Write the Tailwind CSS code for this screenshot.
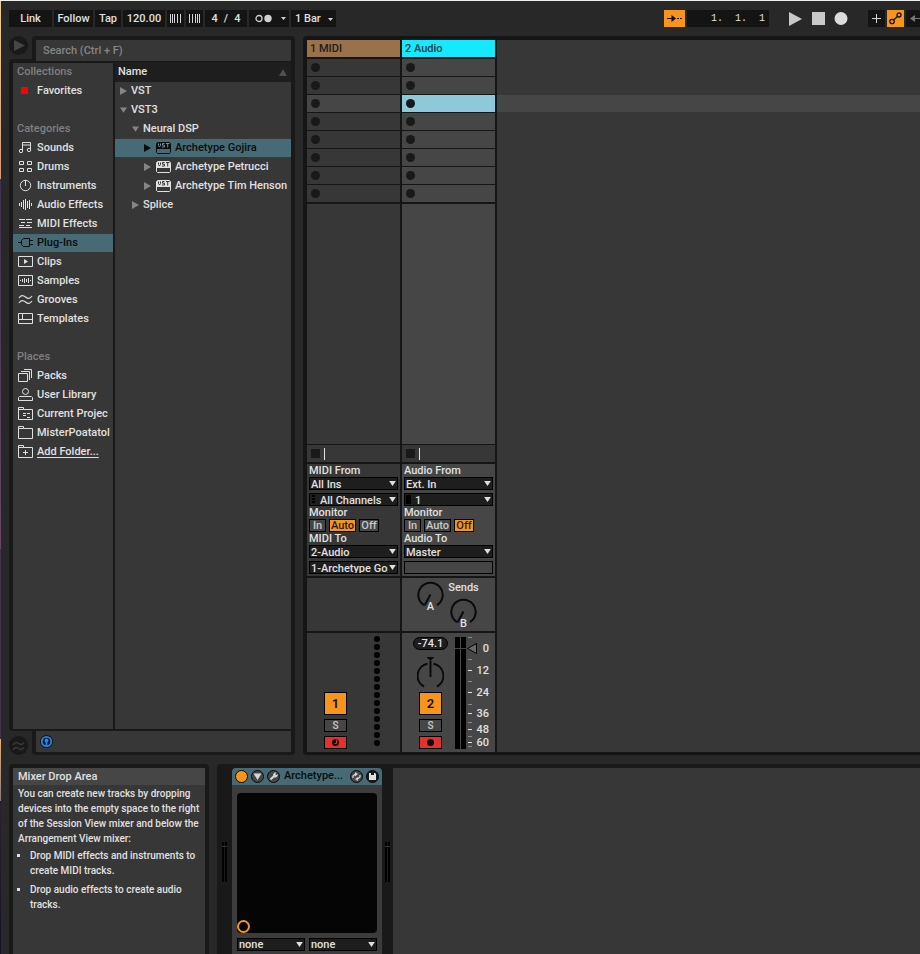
<!DOCTYPE html>
<html lang="en">
<head>
  <meta charset="UTF-8" />
  <meta name="viewport" content="width=device-width, initial-scale=1.0"/>
  <title>Session View</title>
  <script src="https://cdn.jsdelivr.net/npm/@tailwindcss/browser@4"></script>
</head>
<body class="bg-[#282828] text-[#e0e0e0] font-['Roboto',sans-serif] text-[11px] font-medium">
  <!-- shared symbols -->
  <svg class="hidden">
    <symbol id="down" viewBox="0 0 8 6"><path d="M0 0h8L4 6z" fill="currentColor"/></symbol>
    <symbol id="right" viewBox="0 0 7 8"><path d="M0 0l7 4-7 4z" fill="currentColor"/></symbol>
    <symbol id="vst" viewBox="0 0 15 12">
      <path d="M1.500 .5h12l1 1v9l-1 1h-12l-1-1v-9z" fill="none" stroke="currentColor"/>
      <path d="M1 1h13v6H1z" fill="currentColor"/>
      <path d="M2.500 1.500v2l1 1.500 1-1.500v-2M8.500 1.500h-2v1.700h2v1.800h-2.500M10 1.500h3.500M11.700 1.500v4" fill="none" stroke="var(--cut,#373737)"/>
    </symbol>
    <symbol id="knob" viewBox="0 0 27 32">
      <path d="M7 24.200a12.200 12.200 0 1 1 13 0M13.500 13.500l-6 11" fill="none" stroke="#0a0a0a" stroke-width="2"/>
    </symbol>
  </svg>

  <div class="h-screen min-h-[760px] flex flex-col overflow-hidden border-t border-t-[#eceeec] relative">
    <div class="absolute left-0 top-0 bottom-0 w-px flex flex-col">
      <div class="h-[178px] bg-linear-to-b from-[#f0cf94] to-[#d99a78]"></div>
      <div class="h-[370px] bg-linear-to-b from-[#3d3050] to-[#6b4766]"></div>
      <div class="h-[190px] bg-[#43304a]"></div>
      <div class="h-[62px] bg-linear-to-b from-[#e8b070] to-[#8a7a80]"></div>
      <div class="flex-1 bg-linear-to-b from-[#2a2030] to-[#161028]"></div>
    </div>

    <!-- control bar -->
    <header class="h-[35px] shrink-0 pt-[9px] pl-[9px] flex items-start gap-0.5 *:shrink-0">
      <button class="h-[17px] w-[43px] pt-px bg-[#141414]">Link</button>
      <button class="h-[17px] w-[39px] pt-px bg-[#141414]">Follow</button>
      <button class="h-[17px] w-[26px] pt-px bg-[#141414]">Tap</button>
      <input aria-label="Tempo" value="120.00" class="h-[17px] w-[42px] bg-[#141414] text-center"/>
      <button aria-label="Nudge down" class="h-[17px] w-[17px] bg-[#141414]">
        <svg class="mx-auto" width="11" height="9" fill="none" stroke="#d5d5d5"><path d="M.5 0v9M2.500 0v9M4.500 0v9M7.500 0v9M10.500 0v9"/></svg>
      </button>
      <button aria-label="Nudge up" class="h-[17px] w-[17px] bg-[#141414]">
        <svg class="mx-auto" width="11" height="9" fill="none" stroke="#d5d5d5"><path d="M.5 0v9M3.500 0v9M6.500 0v9M8.500 0v9M10.500 0v9"/></svg>
      </button>
      <button class="h-[17px] w-[42px] pt-px bg-[#141414] flex items-center justify-center gap-1.5"><span>4</span><span>/</span><span>4</span></button>
      <button aria-label="Metronome" class="h-[17px] w-[40px] bg-[#141414] flex items-center justify-between pl-1.5 pr-[3px]">
        <svg width="17" height="9"><circle cx="4" cy="4.500" r="3" fill="none" stroke="#d0d0d0" stroke-width="1.300"/><circle cx="13" cy="4.500" r="3.700" fill="#d0d0d0"/></svg>
        <svg width="5" height="3" class="text-[#d0d0d0]"><path d="M0 0h5L2.500 3z" fill="currentColor"/></svg>
      </button>
      <button class="h-[17px] w-[45px] pt-px bg-[#141414] flex items-center justify-between pl-1 pr-[3px]">1 Bar
        <svg width="5" height="3" class="text-[#d0d0d0]"><path d="M0 0h5L2.500 3z" fill="currentColor"/></svg>
      </button>

      <div class="ml-auto flex gap-0.5">
        <button aria-label="Follow playback" class="h-[17px] w-[21px] bg-[#f7941d]">
          <svg class="mx-auto" width="15" height="9"><path d="M0 4.500h6M10 4.500h2M13 4.500h2" stroke="#111"/><path d="M4.500 1v7L9 4.500z" fill="#111"/></svg>
        </button>
        <input aria-label="Arrangement position" value="1.  1.  1" class="h-[17px] w-[82px] bg-[#141414] text-right pr-1 text-[10px] font-['Liberation_Mono',monospace]"/>
        <div class="flex items-center gap-[9px] px-[18px] h-[17px]">
          <button aria-label="Play"><svg width="14" height="14"><path d="M0 0l13 7L0 14z" fill="#c9c9c9"/></svg></button>
          <button aria-label="Stop"><svg width="13" height="13"><path d="M0 0h13v13H0z" fill="#c9c9c9"/></svg></button>
          <button aria-label="Record"><svg width="14" height="13"><circle cx="7" cy="6.500" r="6.500" fill="#dcdcdc"/></svg></button>
        </div>
        <button aria-label="Overdub" class="h-[17px] w-[17px] bg-[#141414]">
          <svg class="mx-auto" width="9" height="9"><path d="M4.500 0v9M0 4.500h9" stroke="#d5d5d5"/></svg>
        </button>
        <button aria-label="Automation arm" class="h-[17px] w-[17px] bg-[#f7941d]">
          <svg class="mx-auto" width="13" height="13" fill="none" stroke="#111" stroke-width="1.300"><circle cx="3" cy="9.500" r="2.200"/><circle cx="10" cy="3" r="2"/><path d="M4.500 8l4-3.500"/></svg>
        </button>
        <button aria-label="Re-enable automation" class="h-[17px] w-[14px] bg-[#141414] pl-1">
          <svg width="10" height="9"><path d="M4 4.500h6" stroke="#777"/><path d="M5 1v7L0 4.500z" fill="#777"/></svg>
        </button>
      </div>
    </header>

    <main class="flex-1 min-h-0 flex gap-2 pl-[9px]">
      <!-- browser -->
      <section class="w-[286px] shrink-0 flex flex-col">
        <div class="flex h-[23px] shrink-0">
          <button aria-label="Preview" class="w-[19px] h-[19px] mr-1 rounded-full bg-[#191919] flex items-center justify-center text-[#464646]">
            <svg width="12" height="11" class="ml-0.5"><path d="M0 0l11 5.500L0 11z" fill="currentColor"/></svg>
          </button>
          <div class="flex-1 bg-[#191919] rounded-t pt-1 px-1 flex">
            <input aria-label="Search" placeholder="Search (Ctrl + F)" class="w-full h-[21px] bg-[#373737] px-[7px] placeholder:text-[#858585] relative"/>
          </div>
        </div>
        <div class="flex-1 min-h-0 flex gap-0.5 bg-[#191919] rounded-l p-1 pb-0.5">
          <nav class="w-[100px] shrink-0 bg-[#373737] overflow-hidden leading-[18px] whitespace-nowrap">
            <h2 class="h-[19px] pl-1 text-[#808080]">Collections</h2>
            <a href="#" class="flex items-center h-[18px] pl-2 gap-[9px]"><span class="w-[7px] h-2 border-b border-[#373737] bg-[#f00]"></span>Favorites</a>
            <h2 class="h-[19px] pl-1 mt-5 text-[#808080]">Categories</h2>
            <div class="flex flex-col gap-px">
              <a href="#" class="flex items-center h-[18px] pl-[5px] gap-1">
                <svg width="15" height="14" fill="none" stroke="currentColor"><path d="M4.500 10V1.500h8V9M4.500 4h8"/><circle cx="3" cy="10" r="1.700"/><circle cx="11" cy="9" r="1.700"/></svg>Sounds</a>
              <a href="#" class="flex items-center h-[18px] pl-[5px] gap-1">
                <svg width="15" height="14" fill="none" stroke="currentColor"><path d="M1.500 1.500h4v3h-4zM9.500 1.500h4v3h-4zM1.500 8.500h4v3h-4zM9.500 8.500h4v3h-4z"/></svg>Drums</a>
              <a href="#" class="flex items-center h-[18px] pl-[5px] gap-1">
                <svg width="15" height="14" fill="none" stroke="currentColor"><circle cx="7.500" cy="6.500" r="5.200"/><path d="M7.500 1v6"/></svg>Instruments</a>
              <a href="#" class="flex items-center h-[18px] pl-[5px] gap-1">
                <svg width="15" height="14" fill="none" stroke="currentColor"><path d="M1.500 5v3M3.500 4v5M5.500 2v9M7.500 1v11M9.500 3v7M11.500 2v9M13.500 5v3"/></svg>Audio Effects</a>
              <a href="#" class="flex items-center h-[18px] pl-[5px] gap-1">
                <svg width="15" height="14" fill="none" stroke="currentColor"><path d="M1 2.500h6M8 2.500h6M3 5.500h4M9 5.500h5M1 8.500h5M8 8.500h4M1 10.500h13"/></svg>MIDI Effects</a>
              <a href="#" class="flex items-center h-[18px] pl-[5px] gap-1 bg-[#466a76] text-[#0c0c0c]">
                <svg width="15" height="14" fill="none" stroke="currentColor"><path d="M0 6.500h3M11.500 2.500h-6l-2 2v4l2 2h6zM12 4.500h3M12 8.500h3"/></svg>Plug-Ins</a>
              <a href="#" class="flex items-center h-[18px] pl-[5px] gap-1">
                <svg width="15" height="14" fill="none" stroke="currentColor"><path d="M.5 1.500h14v10H.5z"/><path d="M6 4l4 2.500L6 9z" fill="currentColor" stroke="none"/></svg>Clips</a>
              <a href="#" class="flex items-center h-[18px] pl-[5px] gap-1">
                <svg width="15" height="14" fill="none" stroke="currentColor"><path d="M.5 1.500h14v10H.5zM2.500 6v1M4.500 5v3M6.500 4v5M8.500 5v3M10.500 4v5M12.500 6v1"/></svg>Samples</a>
              <a href="#" class="flex items-center h-[18px] pl-[5px] gap-1">
                <svg width="15" height="14" fill="none" stroke="currentColor" stroke-width="1.200"><path d="M1 5c2-3 4-3 6.500-1S12 6 14 3M1 10c2-3 4-3 6.500-1S12 11 14 8"/></svg>Grooves</a>
              <a href="#" class="flex items-center h-[18px] pl-[5px] gap-1">
                <svg width="15" height="14" fill="none" stroke="currentColor"><path d="M.5 1.500h14v10H.5zM.5 7.500h14M4.500 1.500v6"/></svg>Templates</a>
            </div>
            <h2 class="h-[19px] pl-1 mt-5 text-[#808080]">Places</h2>
            <div class="flex flex-col gap-px">
              <a href="#" class="flex items-center h-[18px] pl-[5px] gap-1">
                <svg width="15" height="14" fill="none" stroke="currentColor"><path d="M.5 4.500h9v8h-9zM3 2.500h8.500V11M6 .5h7.500V9"/></svg>Packs</a>
              <a href="#" class="flex items-center h-[18px] pl-[5px] gap-1">
                <svg width="15" height="14" fill="none" stroke="currentColor"><circle cx="7.500" cy="3.500" r="3"/><path d="M.5 12.500v-3l1-1h12l1 1v3z"/></svg>User Library</a>
              <a href="#" class="flex items-center h-[18px] pl-[5px] gap-1">
                <svg class="shrink-0" width="15" height="14" fill="none" stroke="currentColor"><path d="M.5 12.500V.5h5v2h9v10zM.5 2.500h5M5 6.500h3M5 8.500h3M9 6.500h3M9 10.500h3"/></svg>Current Projec</a>
              <a href="#" class="flex items-center h-[18px] pl-[5px] gap-1">
                <svg class="shrink-0" width="15" height="14" fill="none" stroke="currentColor"><path d="M.5 12.500V.5h5v2h9v10zM.5 2.500h5"/></svg>MisterPoatatol</a>
              <a href="#" class="flex items-center h-[18px] pl-[5px] gap-1">
                <svg width="15" height="14" fill="none" stroke="currentColor"><path d="M.5 12.500V.5h5v2h9v10zM.5 2.500h5M7.500 5v5M5 7.500h5"/></svg><span class="underline underline-offset-2">Add Folder...</span></a>
            </div>
          </nav>
          <div class="flex-1 min-w-0 bg-[#373737] -mt-px whitespace-nowrap">
            <div class="h-5 pt-px bg-[#1e1e1e] flex items-center justify-between pl-[3px] pr-1">Name
              <svg width="8" height="7"><path d="M4 0l4 7H0z" fill="#505050"/></svg>
            </div>
            <div class="flex flex-col gap-px">
              <div class="h-[18px] flex items-center pl-[5px] gap-1"><svg class="w-[7px] h-2 text-[#858585]"><use href="#right"/></svg>VST</div>
              <div class="h-[18px] flex items-center pl-[5px] gap-1"><svg class="w-[7px] h-1.5 text-[#858585]"><use href="#down"/></svg>VST3</div>
              <div class="h-[18px] flex items-center pl-[17px] gap-1"><svg class="w-[7px] h-1.5 text-[#858585]"><use href="#down"/></svg>Neural DSP</div>
              <div class="h-[18px] flex items-center pl-[29px] gap-1 bg-[#466a76] text-[#0c0c0c]"><svg class="w-[7px] h-2"><use href="#right"/></svg><svg class="w-[15px] h-3 ml-px [--cut:#6d949f]"><use href="#vst"/></svg>Archetype Gojira</div>
              <div class="h-[18px] flex items-center pl-[29px] gap-1"><svg class="w-[7px] h-2 text-[#858585]"><use href="#right"/></svg><svg class="w-[15px] h-3 ml-px"><use href="#vst"/></svg>Archetype Petrucci</div>
              <div class="h-[18px] flex items-center pl-[29px] gap-1"><svg class="w-[7px] h-2 text-[#858585]"><use href="#right"/></svg><svg class="w-[15px] h-3 ml-px"><use href="#vst"/></svg>Archetype Tim Henson</div>
              <div class="h-[18px] flex items-center pl-[17px] gap-1"><svg class="w-[7px] h-2 text-[#858585]"><use href="#right"/></svg>Splice</div>
            </div>
          </div>
        </div>
        <div class="flex h-6 shrink-0">
          <button aria-label="Groove pool" class="w-[19px] h-[19px] mt-[5px] mr-1 rounded-full bg-[#191919] flex items-center justify-center">
            <svg width="13" height="10" fill="none" stroke="#383838" stroke-width="1.500"><path d="M1 4c2-3 3.500-3 5.500-1.500S10 4 12 1.500M1 9c2-3 3.500-3 5.500-1.500S10 9 12 6.500"/></svg>
          </button>
          <div class="flex-1 bg-[#191919] rounded-b px-1 pb-[3px]">
            <div class="h-[21px] bg-[#373737] flex items-center pl-1">
              <button aria-label="Raw preview"><svg width="13" height="13"><circle cx="6.500" cy="6.500" r="6.500" fill="#0b1420"/><circle cx="6.500" cy="6.500" r="4.700" fill="none" stroke="#2d85e0" stroke-width="1.800"/><path d="M6.500 5v6" stroke="#2d85e0" stroke-width="1.800"/><circle cx="6.500" cy="5.500" r="2" fill="#2d85e0"/></svg></button>
            </div>
          </div>
        </div>
      </section>

      <!-- session view -->
      <section class="flex-1 min-w-0 flex gap-0.5 bg-[#151515] rounded-l p-1 pb-[3px] pr-0">
        <article class="w-[93px] shrink-0 flex flex-col gap-0.5">
          <h2 class="h-[17px] bg-[#99724b] text-[#1c1c1c] leading-[17px] pl-[3px]">1 MIDI</h2>
          <div class="flex flex-col gap-px" data-slots="midi"></div>
          <div class="flex-1 flex flex-col gap-px">
            <div class="flex-1 bg-[#373737]"></div>
            <div class="h-[17px] bg-[#373737] flex items-center pl-1 gap-1">
              <button aria-label="Stop clip" class="w-[9px] h-[9px] bg-[#191919]"></button><span class="w-px h-3 bg-[#e0e0e0]"></span>
            </div>
          </div>
          <div class="bg-[#373737] px-0.5 pb-0.5 leading-[13px]">
            <label for="midi-from" class="block">MIDI From</label>
            <div class="relative mb-[3px]">
              <select id="midi-from" class="block w-full h-[13px] appearance-none bg-[#1e1e1e] border border-black pl-px pr-3"><option>All Ins</option></select>
              <svg class="absolute right-0.5 top-1 w-[7px] h-[5px] pointer-events-none"><use href="#down"/></svg>
            </div>
            <div class="relative">
              <select aria-label="MIDI channel" class="block w-full h-[13px] appearance-none bg-[#1e1e1e] border border-black pl-2.5 pr-[9px]"><option>All Channels</option></select>
              <svg class="absolute left-[3px] top-0.5 pointer-events-none" width="3" height="9"><path d="M1.500 0v9" stroke="#000" stroke-width="3" stroke-dasharray="2 1"/></svg>
              <svg class="absolute right-0.5 top-1 w-[7px] h-[5px] pointer-events-none"><use href="#down"/></svg>
            </div>
            <div>Monitor</div>
            <div class="flex gap-[3px] leading-[11px] text-[#c8c8c8]">
              <button class="w-[17px] h-[13px] border border-black bg-[#464646]">In</button>
              <button class="w-[27px] h-[13px] border border-black bg-[#f7941d] text-[#1c1c1c]">Auto</button>
              <button class="w-5 h-[13px] border border-black bg-[#464646]">Off</button>
            </div>
            <label for="midi-to" class="block">MIDI To</label>
            <div class="relative mb-[3px]">
              <select id="midi-to" class="block w-full h-[13px] appearance-none bg-[#1e1e1e] border border-black pl-px pr-3"><option>2-Audio</option></select>
              <svg class="absolute right-0.5 top-1 w-[7px] h-[5px] pointer-events-none"><use href="#down"/></svg>
            </div>
            <div class="relative">
              <select aria-label="MIDI destination" class="block w-full h-[13px] appearance-none bg-[#1e1e1e] border border-black pl-px pr-[9px]"><option>1-Archetype Gojira</option></select>
              <svg class="absolute right-0.5 top-1 w-[7px] h-[5px] pointer-events-none"><use href="#down"/></svg>
            </div>
          </div>
          <div class="h-[53px] bg-[#373737]"></div>
          <div class="h-[119px] bg-[#373737] flex items-end gap-[27px] pl-[17px] pb-[3px]">
            <div class="flex flex-col gap-1 w-[23px]">
              <button class="h-[23px] border border-black bg-[#f7941d] text-[#111] text-[13px] font-semibold">1</button>
              <button class="h-[13px] border border-black bg-[#464646] text-[#c8c8c8] text-[10px] leading-[11px]">S</button>
              <button aria-label="Arm track 1" class="h-[13px] border border-black bg-[#e4322b]">
                <svg class="mx-auto" width="7" height="7"><circle cx="3.500" cy="3.500" r="3.500" fill="#0c0c0c"/><path d="M4.500 1v3.500h-2" fill="none" stroke="#e4322b"/></svg>
              </button>
            </div>
            <div class="flex flex-col gap-0.5 pb-[3px]" id="leds"></div>
          </div>
        </article>

        <article class="w-[93px] shrink-0 flex flex-col gap-0.5">
          <h2 class="h-[17px] bg-[#16e9ff] text-[#123c42] leading-[17px] pl-[3px]">2 Audio</h2>
          <div class="flex flex-col gap-px" data-slots="audio"></div>
          <div class="flex-1 flex flex-col gap-px">
            <div class="flex-1 bg-[#464646]"></div>
            <div class="h-[17px] bg-[#373737] flex items-center pl-1 gap-1">
              <button aria-label="Stop clip" class="w-[9px] h-[9px] bg-[#191919]"></button><span class="w-px h-3 bg-[#e0e0e0]"></span>
            </div>
          </div>
          <div class="bg-[#464646] px-0.5 pb-0.5 leading-[13px]">
            <label for="audio-from" class="block">Audio From</label>
            <div class="relative mb-[3px]">
              <select id="audio-from" class="block w-full h-[13px] appearance-none bg-[#1e1e1e] border border-black pl-px pr-3"><option>Ext. In</option></select>
              <svg class="absolute right-0.5 top-1 w-[7px] h-[5px] pointer-events-none"><use href="#down"/></svg>
            </div>
            <div class="relative">
              <select aria-label="Audio input channel" class="block w-full h-[13px] appearance-none bg-[#1e1e1e] border border-black pl-2.5 pr-3"><option>1</option></select>
              <svg class="absolute left-0.5 top-0.5 pointer-events-none" width="5" height="9"><path d="M0 0h5v9H0z"/></svg>
              <svg class="absolute right-0.5 top-1 w-[7px] h-[5px] pointer-events-none"><use href="#down"/></svg>
            </div>
            <div>Monitor</div>
            <div class="flex gap-[3px] leading-[11px] text-[#c8c8c8]">
              <button class="w-[17px] h-[13px] border border-black bg-[#464646]">In</button>
              <button class="w-[27px] h-[13px] border border-black bg-[#464646]">Auto</button>
              <button class="w-5 h-[13px] border border-black bg-[#f7941d] text-[#1c1c1c]">Off</button>
            </div>
            <label for="audio-to" class="block">Audio To</label>
            <div class="relative mb-[3px]">
              <select id="audio-to" class="block w-full h-[13px] appearance-none bg-[#1e1e1e] border border-black pl-px pr-3"><option>Master</option></select>
              <svg class="absolute right-0.5 top-1 w-[7px] h-[5px] pointer-events-none"><use href="#down"/></svg>
            </div>
            <div class="h-[13px] border border-black"></div>
          </div>
          <div class="h-[53px] bg-[#464646] flex gap-1.5 pl-[15px] pt-[3px] overflow-hidden">
            <div class="relative w-[27px]">
              <svg class="w-[27px] h-8"><use href="#knob"/></svg>
              <span class="absolute inset-x-0 top-[19px] text-center leading-[13px]">A</span>
            </div>
            <div class="w-[27px]">
              <div class="h-[17px] leading-[14px] flex justify-center">Sends</div>
              <div class="relative">
                <svg class="w-[27px] h-8"><use href="#knob"/></svg>
                <span class="absolute inset-x-0 top-[19px] text-center leading-[13px]">B</span>
              </div>
            </div>
          </div>
          <div class="h-[119px] bg-[#464646] flex gap-[7px] pl-[11px] pt-1 pb-[3px]">
            <div class="w-[35px] flex flex-col items-center">
              <div class="w-full h-[13px] rounded-full border border-black bg-[#1e1e1e] text-center leading-[11px]">-74.1</div>
              <svg class="mt-1.5" width="27" height="32" fill="none" stroke="#0a0a0a" stroke-width="2"><path d="M9.500 1h8l-4 4z" fill="#0a0a0a" stroke="none"/><path d="M13.500 5v16M7 30.500a12.200 12.200 0 0 1 3.500-22.700M20 30.500a12.200 12.200 0 0 0-3.500-22.700"/></svg>
              <div class="flex flex-col gap-1 w-[23px] mt-1">
                <button class="h-[23px] border border-black bg-[#f7941d] text-[#111] text-[13px] font-semibold">2</button>
                <button class="h-[13px] border border-black bg-[#464646] text-[#c8c8c8] text-[10px] leading-[11px]">S</button>
                <button aria-label="Arm track 2" class="h-[13px] border border-black bg-[#e4322b]">
                  <svg class="mx-auto" width="7" height="7"><circle cx="3.500" cy="3.500" r="3.500" fill="#0c0c0c"/></svg>
                </button>
              </div>
            </div>
            <svg width="36" height="112" class="overflow-visible">
              <path d="M0 0h5v112H0zM6 0h5v112H6z" fill="#000"/>
              <path d="M0 11.500h11" stroke="#464646"/>
              <path d="M12.500 11.500l9-5v10z" fill="#6a6a6a" stroke="#000"/>
              <path d="M13 33.500h4M13 55.500h4M13 76.500h4M13 92.500h4M13 105.500h4" stroke="#e0e0e0"/>
              <path d="M13 .5h4M13 22.500h4M13 44.500h4M13 67.500h4M13 85.500h4M13 99.500h4M13 109.500h4" stroke="#8a8a8a"/>
              <g fill="#e0e0e0" text-anchor="end">
                <text x="34" y="15">0</text><text x="34" y="37">12</text><text x="34" y="59">24</text>
                <text x="34" y="80">36</text><text x="34" y="96">48</text><text x="34" y="109">60</text>
              </g>
            </svg>
          </div>
        </article>

        <!-- empty drop area -->
        <div class="flex-1 bg-[#373737] pt-[55px]"><div class="h-[17px] bg-[#464646]"></div></div>
      </section>
    </main>

    <footer class="h-[190px] mt-[9px] shrink-0 flex gap-2 pl-[9px]">
      <!-- info view -->
      <section class="w-[200px] shrink-0 bg-[#191919] rounded-t pt-1 px-1">
        <div class="h-full bg-[#373737] text-[10px] leading-[15px]">
          <h2 class="h-[17px] bg-[#464646] text-[11px] leading-[17px] pl-[5px]">Mixer Drop Area</h2>
          <div class="pl-[5px] pt-[1px] whitespace-nowrap">
            <p>You can create new tracks by dropping<br>devices into the empty space to the right<br>of the Session View mixer and below the<br>Arrangement View mixer:</p>
            <ul class="list-[square] pl-3 mt-0.5 flex flex-col gap-1">
              <li>Drop MIDI effects and instruments to<br>create MIDI tracks.</li>
              <li>Drop audio effects to create audio<br>tracks.</li>
            </ul>
          </div>
        </div>
      </section>

      <!-- device view -->
      <section class="flex-1 min-w-0 bg-[#191919] rounded-tl pt-1 pl-[5px] flex">
        <svg class="mt-[74px] shrink-0" width="5" height="40"><path d="M0 0h2v40H0zM3 0h2v40H3z"/><path d="M0 4.500h5" stroke="#373737"/></svg>
        <div class="w-[150px] shrink-0 mx-[5px] bg-[#3c3c3c] rounded-t">
          <div class="h-[17px] bg-[#466a76] rounded-t flex items-center px-[3px] gap-[3px] text-[#0c0c0c]">
            <button aria-label="Device on"><svg width="13" height="13"><circle cx="6.500" cy="6.500" r="6" fill="#f7941d" stroke="#0c0c0c"/></svg></button>
            <button aria-label="Unfold"><svg width="13" height="13"><circle cx="6.500" cy="6.500" r="6" fill="#464646" stroke="#0c0c0c"/><path d="M2.500 3.500h8l-4 6.500z" fill="#d5d5d5"/></svg></button>
            <button aria-label="Edit plug-in"><svg width="13" height="13"><circle cx="6.500" cy="6.500" r="6" fill="#464646" stroke="#0c0c0c"/><path d="M3.500 9.500l4-4" stroke="#d5d5d5" stroke-width="2"/><path d="M6 4.500l1.500-2 2 0-1.200 1.500 1 1L11 4l-.5 2-1.500 1.500H7z" fill="#d5d5d5"/></svg></button>
            <span class="flex-1 min-w-0 pl-px text-[11px] whitespace-nowrap">Archetype...</span>
            <button aria-label="Hot-swap"><svg width="13" height="13"><circle cx="6.500" cy="6.500" r="6" fill="#464646" stroke="#0c0c0c"/><path d="M3 8V6l2.500-2M10 5v2L7.500 9" fill="none" stroke="#d5d5d5" stroke-width="1.300"/><path d="M5 2l3 2-3 2.500zM8 7v4L5 9z" fill="#d5d5d5"/></svg></button>
            <button aria-label="Save preset"><svg width="13" height="13"><circle cx="6.500" cy="6.500" r="6" fill="#191919" stroke="#0c0c0c"/><path d="M3 3h6l1 1v6H3z" fill="#e0e0e0"/><path d="M5 3h3v2H5z" fill="#191919"/></svg></button>
          </div>
          <div class="px-[5px] pt-2">
            <div class="h-[140px] bg-[#050505] rounded flex items-end">
              <svg width="13" height="13"><circle cx="6.500" cy="6.500" r="5.500" fill="none" stroke="#f7941d" stroke-width="2"/></svg>
            </div>
            <div class="flex gap-1 mt-[5px]">
              <div class="relative flex-1">
                <select aria-label="X parameter" class="block w-full h-[13px] appearance-none bg-[#1e1e1e] border border-black pl-px leading-[11px]"><option>none</option></select>
                <svg class="absolute right-0.5 top-1 w-[7px] h-[5px] pointer-events-none"><use href="#down"/></svg>
              </div>
              <div class="relative flex-1">
                <select aria-label="Y parameter" class="block w-full h-[13px] appearance-none bg-[#1e1e1e] border border-black pl-px leading-[11px]"><option>none</option></select>
                <svg class="absolute right-0.5 top-1 w-[7px] h-[5px] pointer-events-none"><use href="#down"/></svg>
              </div>
            </div>
          </div>
        </div>
        <svg class="mt-[74px] -ml-0.5 shrink-0" width="5" height="40"><path d="M0 0h2v40H0zM3 0h2v40H3z"/><path d="M0 4.500h5" stroke="#373737"/></svg>
        <div class="flex-1 bg-[#373737] ml-[3px]"></div>
      </section>
    </footer>
  </div>

  <script>
    // clip slots, the third scene is the selected one
    const slotColors = {
      midi: ['bg-[#373737]', 'bg-[#464646]'],
      audio: ['bg-[#464646]', 'bg-[#8dc9d8]']
    };
    document.querySelectorAll('[data-slots]').forEach(function(col) {
      const colors = slotColors[col.dataset.slots];
      for (let i = 0; i < 8; i++) {
        const color = i === 2 ? colors[1] : colors[0];
        col.innerHTML += '<button aria-label="Slot ' + (i + 1) + '" class="h-[17px] pl-1 flex items-center ' + color + '"><span class="w-[9px] h-[9px] rounded-full bg-[#191919]"></span></button>';
      }
    });

    // MIDI activity dots
    for (let i = 0; i < 14; i++) {
      document.getElementById('leds').innerHTML += '<span class="w-1.5 h-1.5 rounded-full bg-black"></span>';
    }
  </script>
</body>
</html>
